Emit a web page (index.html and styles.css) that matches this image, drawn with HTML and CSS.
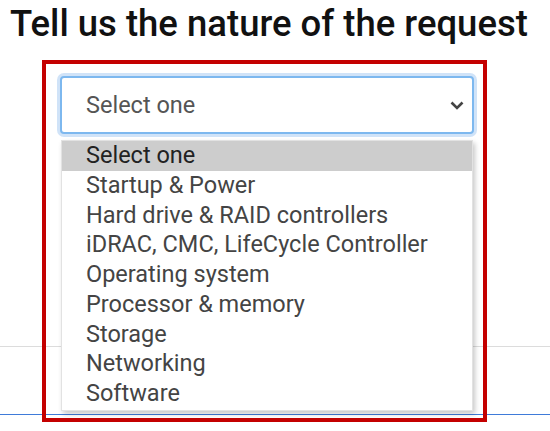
FILE: index.html
```html
<!DOCTYPE html>
<html>
<head>
<meta charset="utf-8">
<link rel="stylesheet" href="styles.css">
</head>
<body>
<h1 class="title">Tell us the nature of the request</h1>
<div class="stage">
  <div class="highlight">
    <div class="select">
      <span>Select one</span>
      <svg class="chevron" width="14" height="9" viewBox="0 0 14 9"><polyline points="1.5,1.5 7,7 12.5,1.5" fill="none" stroke="#444" stroke-width="2.6"/></svg>
    </div>
    <ul class="options">
      <li class="active">Select one</li>
      <li>Startup &amp; Power</li>
      <li>Hard drive &amp; RAID controllers</li>
      <li>iDRAC, CMC, LifeCycle Controller</li>
      <li>Operating system</li>
      <li>Processor &amp; memory</li>
      <li>Storage</li>
      <li>Networking</li>
      <li>Software</li>
    </ul>
  </div>
</div>
</body>
</html>
```
FILE: styles.css
```css
html, body {
  margin: 0;
  padding: 0;
  background: #fff;
}
body {
  width: 550px;
  height: 431px;
  overflow: hidden;
  font-family: Roboto, "Liberation Sans", sans-serif;
}
.title {
  margin: 0;
  padding: 0 0 0 10px;
  font-size: 36.5px;
  line-height: 48px;
  font-weight: 500;
  color: #111;
  white-space: nowrap;
}
.stage {
  height: 383px;
  padding-top: 12px;
  box-sizing: border-box;
  background:
    linear-gradient(#dcdcdc, #dcdcdc) 0 298px / 100% 1px no-repeat,
    linear-gradient(#3f7bd9, #3f7bd9) 0 366px / 100% 1px no-repeat;
}
.highlight {
  margin-left: 42px;
  width: 445px;
  height: 362px;
  box-sizing: border-box;
  border: 4px solid #c40000;
  padding: 12px 0 0 14px;
}
.select {
  width: 414px;
  height: 58px;
  box-sizing: border-box;
  border: 2px solid #7db8ef;
  border-radius: 4px;
  box-shadow: 0 0 0 3px rgba(120, 175, 235, 0.35);
  background: #fff;
  display: flex;
  align-items: center;
  justify-content: space-between;
  padding: 0 8px 0 24px;
  font-size: 23.5px;
  color: #555;
}
.chevron {
  display: block;
}
.options {
  list-style: none;
  margin: 6px 0 0 1px;
  padding: 0 0 1px 0;
  width: 412px;
  box-sizing: border-box;
  background: #fff;
  border: 1px solid #e2e2e2;
  box-shadow: 2px 3px 5px rgba(0, 0, 0, 0.22);
}
.options li {
  height: 29.75px;
  line-height: 29.75px;
  padding-left: 24px;
  font-size: 23.5px;
  color: #444;
  white-space: nowrap;
}
.options li.active {
  background: #cdcdcd;
  color: #222;
}
```
